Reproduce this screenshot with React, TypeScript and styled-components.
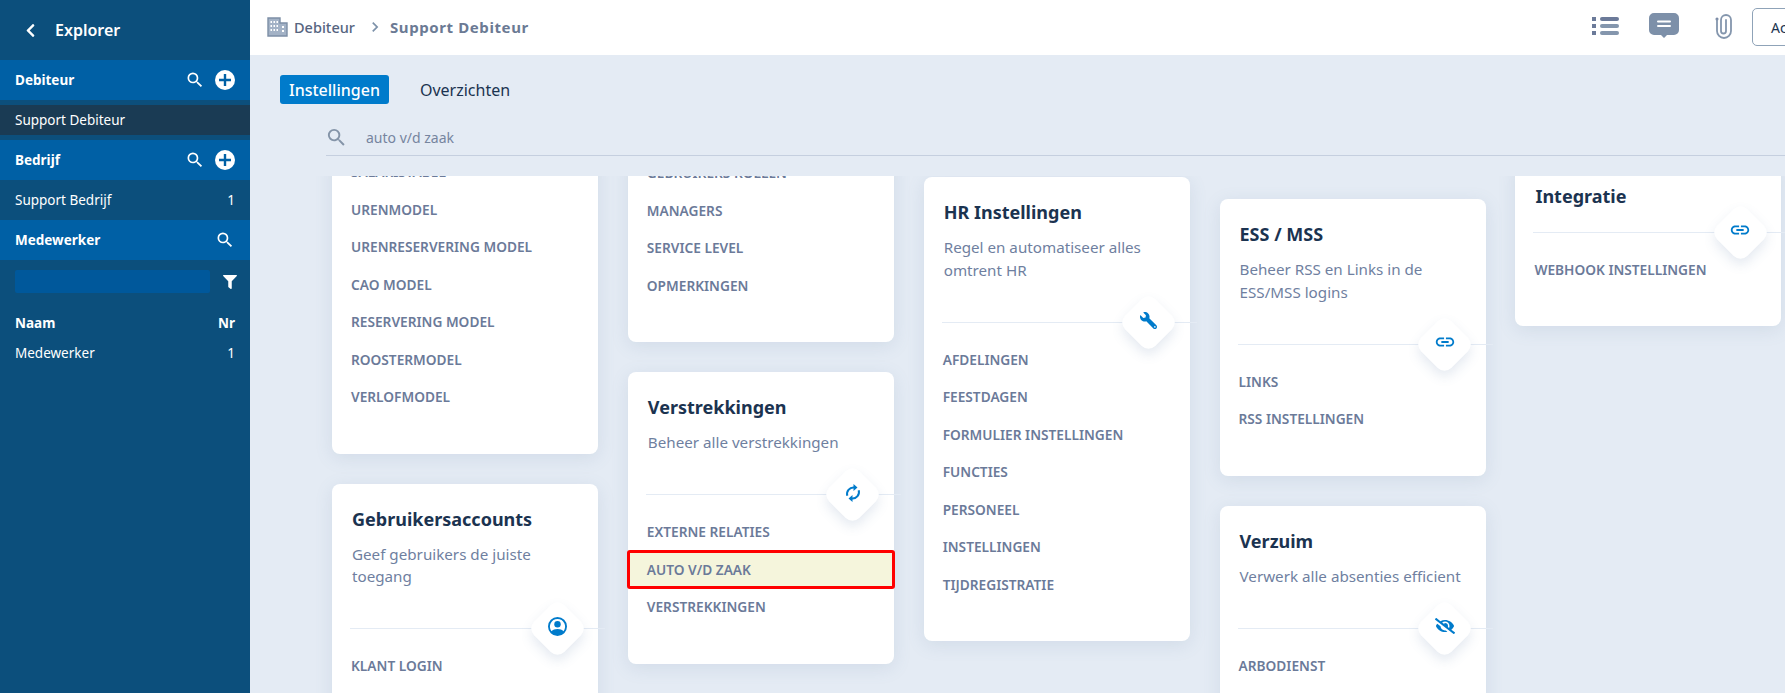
import React from 'react';
import styled, { createGlobalStyle } from 'styled-components';
import { FaWrench, FaEyeSlash, FaFilter, FaChevronLeft } from 'react-icons/fa';
import { MdLink, MdSearch, MdChevronRight } from 'react-icons/md';

const GlobalStyle = createGlobalStyle`
  html, body {
    margin: 0;
    height: 100%;
    overflow: hidden;
  }

  body {
    font-family: 'Noto Sans', 'Open Sans', sans-serif;
    background-color: #e4ebf4;
  }
`;

const Page = styled.div`
  display: flex;
  width: 100vw;
  height: 100vh;
  overflow: hidden;
`;

const Sidebar = styled.aside`
  flex: 0 0 250px;
  background-color: #0c4f7c;
  color: #ffffff;
`;

const SidebarTitle = styled.div`
  height: 60px;
  padding-left: 23px;
  display: flex;
  align-items: center;
  gap: 17px;
  font-size: 16px;
  font-weight: 600;

  svg {
    font-size: 15px;
  }
`;

const SectionBar = styled.div`
  height: 40px;
  padding: 0 15px;
  display: flex;
  align-items: center;
  gap: 10px;
  background-color: #0060a5;
  font-size: 13.5px;
  font-weight: 700;
`;

const SectionName = styled.span`
  flex: 1;
`;

const PlusCircle = styled.svg`
  width: 20px;
  height: 20px;
`;

const SearchIcon = styled(MdSearch)`
  font-size: 20px;
`;

const Row = styled.div<{ $active?: boolean; $height?: number; $bold?: boolean }>`
  height: ${(p) => p.$height ?? 40}px;
  padding: 0 15px;
  display: flex;
  align-items: center;
  justify-content: space-between;
  font-size: 13.5px;
  font-weight: ${(p) => (p.$bold ? 700 : 400)};
  background-color: ${(p) => (p.$active ? '#1a3b54' : 'transparent')};
  margin: ${(p) => (p.$active ? '5px 0' : '0')};
`;

const FilterRow = styled.div`
  margin: 10px 0 15px;
  padding: 0 13px 0 15px;
  display: flex;
  align-items: center;
  justify-content: space-between;
`;

const FilterInput = styled.div`
  width: 195px;
  height: 23px;
  border-radius: 2px;
  background-color: #00589b;
`;

const Main = styled.main`
  flex: 1;
  min-width: 0;
  display: flex;
  flex-direction: column;
`;

const TopBar = styled.header`
  flex: 0 0 55px;
  box-sizing: border-box;
  padding: 0 0 2px 17px;
  display: flex;
  align-items: center;
  background-color: #ffffff;
`;

const Crumb = styled.span`
  margin-left: 6px;
  font-size: 14.5px;
  font-weight: 500;
  color: #56657f;
`;

const CrumbCurrent = styled.span`
  font-size: 15px;
  font-weight: 700;
  letter-spacing: 0.6px;
  color: #6b7a94;
`;

const CrumbArrow = styled(MdChevronRight)`
  margin: 0 5px 0 10px;
  font-size: 20px;
  color: #7d92aa;
`;

const TopActions = styled.div`
  margin-left: auto;
  display: flex;
  align-items: center;
  flex: 0 0 auto;
`;

const ActionIcon = styled.svg<{ $gap: number }>`
  margin: 0 ${(p) => p.$gap}px 1px 0;
  display: block;
`;

const ActionButton = styled.button`
  width: 90px;
  height: 38px;
  margin: 1px -57px 0 0;
  padding: 0 0 0 18px;
  border: 1px solid #8fa3b8;
  border-radius: 5px;
  background: #ffffff;
  font-family: inherit;
  font-size: 14px;
  color: #1b3350;
  text-align: left;
`;

const Tabs = styled.nav`
  margin: 20px 0 0 30px;
  display: flex;
  align-items: center;
  gap: 31px;
`;

const Tab = styled.div<{ $active?: boolean }>`
  height: 29px;
  padding: 0 ${(p) => (p.$active ? '9px' : '0')};
  display: flex;
  align-items: center;
  border-radius: 3px;
  background-color: ${(p) => (p.$active ? '#007bcb' : 'transparent')};
  color: ${(p) => (p.$active ? '#ffffff' : '#1b3350')};
  font-size: 16px;
  font-weight: ${(p) => (p.$active ? 500 : 400)};
`;

const SearchRow = styled.div`
  margin: 16px 0 0 76px;
  height: 35px;
  display: flex;
  align-items: center;
  gap: 18px;
  border-bottom: 1px solid #c5cfdf;
  font-size: 14px;
  color: #76859f;

  svg {
    margin-left: -1px;
    font-size: 23px;
    color: #8494a8;
  }
`;

const Board = styled.div`
  flex: 1;
  min-height: 0;
  margin-top: 20px;
  padding-left: 82px;
  display: flex;
  gap: 29.85px;
  overflow: hidden;
`;

const Column = styled.div<{ $offset: number }>`
  flex: 0 0 266px;
  min-width: 0;
  margin-top: ${(p) => p.$offset}px;
  display: flex;
  flex-direction: column;
  gap: 30px;
`;

const Card = styled.section`
  flex: 0 0 auto;
  position: relative;
  padding-bottom: 38px;
  border-radius: 8px;
  background-color: #ffffff;
  box-shadow: 0 4px 18px rgba(96, 125, 165, 0.14);
`;

const CardHeader = styled.div`
  padding: 23px 15px 23.5px 20px;
`;

const CardTitle = styled.h2`
  margin: 0;
  font-size: 18px;
  line-height: 24px;
  font-weight: 700;
  color: #1b3350;
`;

const CardText = styled.p`
  margin: 12px 0 17px;
  font-size: 15.2px;
  line-height: 22.5px;
  color: #6f7f9f;
`;

const Divider = styled.div`
  position: relative;
  width: 255px;
  height: 1px;
  margin: 0 0 18px 18px;
  background-color: #e4ebf4;
`;

const Diamond = styled.div`
  position: absolute;
  top: 50%;
  left: 181px;
  width: 52px;
  height: 52px;
  transform: translateY(-50%);
  display: flex;
  align-items: center;
  justify-content: center;
  color: #007bcb;

  &::before {
    content: '';
    position: absolute;
    inset: 4.5px;
    border-radius: 10px;
    background-color: #ffffff;
    transform: rotate(45deg);
    box-shadow: 4px 4px 12px rgba(96, 125, 165, 0.16);
  }

  svg {
    position: relative;
    margin-bottom: 4px;
  }
`;

const WrenchIcon = styled(FaWrench)`
  transform: scaleX(-1);
`;

const Item = styled.div<{ $highlight?: boolean }>`
  height: 37.5px;
  padding-left: 19px;
  display: flex;
  align-items: center;
  box-sizing: border-box;
  font-size: 13.7px;
  font-weight: 600;
  color: #6b7a99;
  text-transform: uppercase;
  background-color: ${(p) => (p.$highlight ? '#f5f5dc' : 'transparent')};
  outline: ${(p) => (p.$highlight ? '3px solid #ff0000' : 'none')};
  outline-offset: -2px;
  border-radius: 2px;
`;

const AccountIcon = () => (
  <svg width="19" height="19" viewBox="0 0 20 20" fill="currentColor">
    <path d="M10 0a10 10 0 1 0 0 20 10 10 0 0 0 0-20Zm0 2a8 8 0 0 1 6.300 12.900C15 13.300 12.600 12.600 10 12.600s-5 .7-6.300 2.300A8 8 0 0 1 10 2Z" />
    <circle cx="10" cy="7.600" r="3.400" />
  </svg>
);

const SyncIcon = () => (
  <svg width="20" height="20" viewBox="0 0 20 20" fill="currentColor">
    <path d="M11 4.500A6.500 6.500 0 0 0 4.300 12.800" fill="none" stroke="currentColor" strokeWidth="2" />
    <path d="M9 15.500A6.500 6.500 0 0 0 15.700 7.200" fill="none" stroke="currentColor" strokeWidth="2" />
    <path d="M10.500 1 14.500 4.500 10.500 8zM9.500 12 5.500 15.500 9.500 19z" />
  </svg>
);

interface CardData {
  title?: string;
  text?: string;
  icon?: React.ReactNode;
  items: string[];
  highlight?: string;
}

const link = <MdLink size={22} />;

const columns: { offset: number; cards: CardData[] }[] = [
  {
    offset: -23,
    cards: [
      {
        items: [
          'Salaristabel',
          'Urenmodel',
          'Urenreservering model',
          'CAO model',
          'Reservering model',
          'Roostermodel',
          'Verlofmodel',
        ],
      },
      {
        title: 'Gebruikersaccounts',
        text: 'Geef gebruikers de juiste toegang',
        icon: <AccountIcon />,
        items: ['Klant login'],
      },
    ],
  },
  {
    offset: -22,
    cards: [
      { items: ['Gebruikers rollen', 'Managers', 'Service level', 'Opmerkingen'] },
      {
        title: 'Verstrekkingen',
        text: 'Beheer alle verstrekkingen',
        icon: <SyncIcon />,
        items: ['Externe relaties', 'Auto v/d zaak', 'Verstrekkingen'],
        highlight: 'Auto v/d zaak',
      },
    ],
  },
  {
    offset: 1,
    cards: [
      {
        title: 'HR Instellingen',
        text: 'Regel en automatiseer alles omtrent HR',
        icon: <WrenchIcon size={17} />,
        items: [
          'Afdelingen',
          'Feestdagen',
          'Formulier instellingen',
          'Functies',
          'Personeel',
          'Instellingen',
          'Tijdregistratie',
        ],
      },
    ],
  },
  {
    offset: 23,
    cards: [
      {
        title: 'ESS / MSS',
        text: 'Beheer RSS en Links in de ESS/MSS logins',
        icon: link,
        items: ['Links', 'RSS instellingen'],
      },
      {
        title: 'Verzuim',
        text: 'Verwerk alle absenties efficient',
        icon: <FaEyeSlash size={20} />,
        items: ['Arbodienst'],
      },
    ],
  },
  {
    offset: -15,
    cards: [{ title: 'Integratie', icon: link, items: ['Webhook instellingen'] }],
  },
];

const SettingsCard = ({ title, text, icon, items, highlight }: CardData) => (
  <Card>
    {title && (
      <>
        <CardHeader>
          <CardTitle>{title}</CardTitle>
          {text && <CardText>{text}</CardText>}
        </CardHeader>
        <Divider>
          <Diamond>{icon}</Diamond>
        </Divider>
      </>
    )}
    {items.map((item) => (
      <Item key={item} $highlight={item === highlight}>
        {item}
      </Item>
    ))}
  </Card>
);

const Plus = () => (
  <PlusCircle viewBox="0 0 20 20">
    <circle cx="10" cy="10" r="10" fill="#ffffff" />
    <path d="M10 4v12M4 10h12" stroke="#0060a5" strokeWidth="2.400" />
  </PlusCircle>
);

const App = () => (
  <Page>
    <GlobalStyle />
    <Sidebar>
      <SidebarTitle>
        <FaChevronLeft />
        Explorer
      </SidebarTitle>
      <SectionBar>
        <SectionName>Debiteur</SectionName>
        <SearchIcon />
        <Plus />
      </SectionBar>
      <Row $active $height={30}>
        Support Debiteur
      </Row>
      <SectionBar>
        <SectionName>Bedrijf</SectionName>
        <SearchIcon />
        <Plus />
      </SectionBar>
      <Row>
        <span>Support Bedrijf</span>
        <span>1</span>
      </Row>
      <SectionBar>
        <SectionName>Medewerker</SectionName>
        <SearchIcon />
      </SectionBar>
      <FilterRow>
        <FilterInput />
        <FaFilter size={14} />
      </FilterRow>
      <Row $height={30} $bold>
        <span>Naam</span>
        <span>Nr</span>
      </Row>
      <Row $height={30}>
        <span>Medewerker</span>
        <span>1</span>
      </Row>
    </Sidebar>
    <Main>
      <TopBar>
        <svg width="21" height="20" viewBox="0 0 21 20">
          <path d="M1 1h12v5h7v13H1z" fill="#a3b2c6" stroke="#7d8fa6" strokeWidth="1.400" />
          <path
            d="M3.500 4h1.500v2H3.500zm3 0h1.500v2H6.500zm3 0h1.500v2H9.500zM3.500 8h1.500v2H3.500zm3 0h1.500v2H6.500zm3 0h1.500v2H9.500zM3.500 12h1.500v2H3.500zm3 0h1.500v2H6.500zm3 0h1.500v2H9.500zM15 9h2v2h-2zm0 4h2v2h-2z"
            fill="#ffffff"
          />
        </svg>
        <Crumb>Debiteur</Crumb>
        <CrumbArrow />
        <CrumbCurrent>Support Debiteur</CrumbCurrent>
        <TopActions>
          <ActionIcon $gap={30} width="27" height="20" viewBox="0 0 27 20">
            <path d="M0 1h4v4H0zM0 8h4v4H0zM0 15h4v4H0z" fill="#6b7a99" />
            <rect x="8" y="1" width="19" height="4" rx="2" fill="#6b7a99" />
            <rect x="8" y="8" width="19" height="4" rx="2" fill="#8496ad" />
            <rect x="8" y="15" width="19" height="4" rx="2" fill="#8496ad" />
          </ActionIcon>
          <ActionIcon $gap={36} width="30" height="26" viewBox="0 0 30 26">
            <path
              d="M5 0h20a5 5 0 0 1 5 5v12a5 5 0 0 1-5 5h-7l-3 3-3-3H5a5 5 0 0 1-5-5V5a5 5 0 0 1 5-5Z"
              fill="#7d90a9"
            />
            <path d="M9 8.500h12M9 13h12" stroke="#ffffff" strokeWidth="2" strokeLinecap="round" />
          </ActionIcon>
          <ActionIcon $gap={19} width="18" height="26" viewBox="0 0 18 26" fill="none">
            <circle cx="2" cy="6" r="1.500" fill="#6b7a99" />
            <path
              d="M2 6v12a7 7 0 0 0 14 0V7a5 5 0 0 0-10 0v11a2.500 2.500 0 0 0 5 0V7"
              stroke="#8496ad"
              strokeWidth="1.800"
              strokeLinecap="round"
            />
          </ActionIcon>
          <ActionButton>Acties</ActionButton>
        </TopActions>
      </TopBar>
      <Tabs>
        <Tab $active>Instellingen</Tab>
        <Tab>Overzichten</Tab>
      </Tabs>
      <SearchRow>
        <MdSearch />
        auto v/d zaak
      </SearchRow>
      <Board>
        {columns.map((column, index) => (
          <Column key={index} $offset={column.offset}>
            {column.cards.map((card, cardIndex) => (
              <SettingsCard key={cardIndex} {...card} />
            ))}
          </Column>
        ))}
      </Board>
    </Main>
  </Page>
);

export default App;
